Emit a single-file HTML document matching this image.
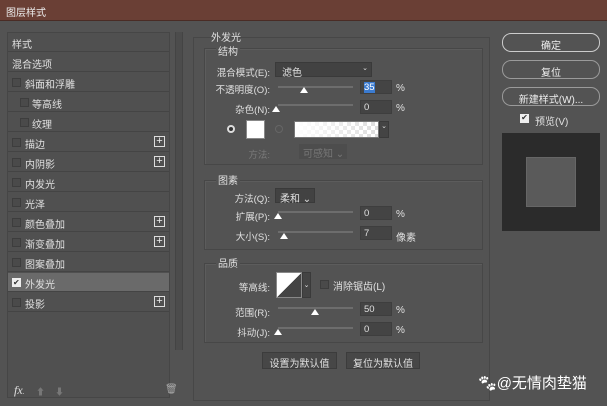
<!DOCTYPE html><html><head><meta charset="utf-8"><style>
*{margin:0;padding:0;box-sizing:border-box}
body{width:607px;height:406px;background:#535353;font-family:"Liberation Sans","Noto Sans CJK SC",sans-serif;font-size:10px;color:#e0e0e0;position:relative;overflow:hidden}
.a{position:absolute}
.title{left:0;top:0;width:607px;height:21px;background:#6a3f35;color:#eee;font-size:10px;padding:4px 0 0 6px;border-bottom:1px solid #4a2c25}
.row{position:absolute;left:8px;width:161px;height:19px;border-bottom:1px solid #444;padding:3px 0 0 4px;font-size:10px}
.cb{position:absolute;width:9px;height:9px;border:1px solid #3d3d3d;background:#4a4a4a;top:5px}
.plus{position:absolute;left:146px;top:3px;width:11px;height:11px;border:1px solid #ddd;color:#eee;font-size:11px;line-height:8px;text-align:center}
.box{position:absolute;border:1px solid #474747;box-shadow:inset 1px 1px 0 #5c5c5c}
.lbl{position:absolute;text-align:right;font-size:9.5px}
.trk{position:absolute;height:2px;background:#6d6d6d}
.th{position:absolute;width:0;height:0;border-left:4px solid transparent;border-right:4px solid transparent;border-bottom:6px solid #fff}
.inp{position:absolute;width:32px;height:14px;background:#444;border:1px solid #3e3e3e;padding:1px 0 0 3px;font-size:9.5px}
.btn{position:absolute;border:1px solid #9a9a9a;border-radius:9px;text-align:center;font-size:10px;color:#eee;height:19px;padding-top:3px}
.gb{position:absolute;background:#474747;border:1px solid #3c3c3c;text-align:center;font-size:10px;padding-top:2px}
</style></head><body>
<div class="a title">图层样式</div>
<div class="a" style="left:7px;top:32px;width:163px;height:366px;background:#505050;border:1px solid #464646"></div>
<div class="a" style="left:175px;top:32px;width:8px;height:318px;background:#4c4c4c;border-left:1px solid #444;border-right:1px solid #444"></div>
<div class="row" style="top:33px">样式</div>
<div class="row" style="top:53px">混合选项</div>
<div class="row" style="top:73px;padding-left:17px"><span class="cb" style="left:4px"></span>斜面和浮雕</div>
<div class="row" style="top:93px;padding-left:24px"><span class="cb" style="left:12px"></span>等高线</div>
<div class="row" style="top:113px;padding-left:24px"><span class="cb" style="left:12px"></span>纹理</div>
<div class="row" style="top:133px;padding-left:17px"><span class="cb" style="left:4px"></span>描边<span class="plus">+</span></div>
<div class="row" style="top:153px;padding-left:17px"><span class="cb" style="left:4px"></span>内阴影<span class="plus">+</span></div>
<div class="row" style="top:173px;padding-left:17px"><span class="cb" style="left:4px"></span>内发光</div>
<div class="row" style="top:193px;padding-left:17px"><span class="cb" style="left:4px"></span>光泽</div>
<div class="row" style="top:213px;padding-left:17px"><span class="cb" style="left:4px"></span>颜色叠加<span class="plus">+</span></div>
<div class="row" style="top:233px;padding-left:17px"><span class="cb" style="left:4px"></span>渐变叠加<span class="plus">+</span></div>
<div class="row" style="top:253px;padding-left:17px"><span class="cb" style="left:4px"></span>图案叠加</div>
<div class="row" style="top:273px;padding-left:17px;background:#6a6a6a"><span class="cb" style="left:4px;background:#eee;border-color:#eee;color:#333;font-size:8px;line-height:7px">✔</span>外发光</div>
<div class="row" style="top:293px;padding-left:17px"><span class="cb" style="left:4px"></span>投影<span class="plus">+</span></div>
<div class="a" style="left:14px;top:383px;font-style:italic;font-family:'Liberation Serif',serif;font-size:12px">fx<span style="font-size:7px">.</span></div>
<div class="a" style="left:36px;top:385px;color:#777;font-size:9px">⬆</div>
<div class="a" style="left:55px;top:385px;color:#777;font-size:9px">⬇</div>
<div class="a" style="left:165px;top:384px;color:#aaa;font-size:10px">🗑</div>
<div class="a" style="left:193px;top:37px;width:297px;height:364px;border:1px solid #474747"></div>
<div class="a" style="left:211px;top:29px;font-size:10px">外发光</div>
<div class="box" style="left:204px;top:48px;width:279px;height:117px"></div>
<div class="a" style="left:216px;top:43px;background:#535353;padding:0 2px">结构</div>
<div class="lbl" style="left:200px;width:70px;top:65px">混合模式(E):</div>
<div class="a" style="left:275px;top:62px;width:97px;height:15px;background:#424242;border:1px solid #3a3a3a;padding:1px 0 0 6px">滤色<span style="position:absolute;right:3px;top:1px;font-size:7px">⌄</span></div>
<div class="lbl" style="left:200px;width:70px;top:82px">不透明度(O):</div>
<div class="trk" style="left:278px;top:86px;width:75px"></div><div class="th" style="left:300px;top:87px"></div>
<div class="inp" style="left:360px;top:80px;width:32px"><span style="background:#3b7bd0;color:#fff">35</span></div><div class="a" style="left:396px;top:83px">%</div>
<div class="lbl" style="left:200px;width:70px;top:102px">杂色(N):</div>
<div class="trk" style="left:278px;top:104px;width:75px"></div><div class="th" style="left:272px;top:106px"></div>
<div class="inp" style="left:360px;top:100px">0</div><div class="a" style="left:396px;top:103px">%</div>
<div class="a" style="left:227px;top:125px;width:8px;height:8px;border-radius:50%;border:2px solid #ddd;background:#333"></div>
<div class="a" style="left:246px;top:120px;width:19px;height:19px;background:#fff;border:1px solid #888"></div>
<div class="a" style="left:275px;top:125px;width:8px;height:8px;border-radius:50%;border:1px solid #666"></div>
<div class="a" style="left:294px;top:121px;width:85px;height:17px;border:1px solid #777;background:linear-gradient(90deg,#fff,rgba(255,255,255,0)),repeating-conic-gradient(#ddd 0 25%,#fff 0 50%) 0 0/8px 8px"></div>
<div class="a" style="left:379px;top:121px;width:10px;height:17px;background:#444;border:1px solid #3a3a3a;font-size:7px;text-align:center">⌄</div>
<div class="lbl" style="left:240px;width:30px;top:147px;color:#7a7a7a">方法:</div>
<div class="a" style="left:299px;top:144px;width:48px;height:15px;background:#4d4d4d;color:#777;padding:1px 0 0 4px">可感知 ⌄</div>
<div class="box" style="left:204px;top:180px;width:279px;height:70px"></div>
<div class="a" style="left:216px;top:172px;background:#535353;padding:0 2px">图素</div>
<div class="lbl" style="left:200px;width:70px;top:191px">方法(Q):</div>
<div class="a" style="left:275px;top:188px;width:40px;height:15px;background:#424242;border:1px solid #3a3a3a;padding:1px 0 0 4px">柔和 ⌄</div>
<div class="lbl" style="left:200px;width:70px;top:209px">扩展(P):</div>
<div class="trk" style="left:278px;top:211px;width:75px"></div><div class="th" style="left:274px;top:213px"></div>
<div class="inp" style="left:360px;top:206px">0</div><div class="a" style="left:396px;top:209px">%</div>
<div class="lbl" style="left:200px;width:70px;top:229px">大小(S):</div>
<div class="trk" style="left:278px;top:231px;width:75px"></div><div class="th" style="left:280px;top:233px"></div>
<div class="inp" style="left:360px;top:226px">7</div><div class="a" style="left:396px;top:229px">像素</div>
<div class="box" style="left:204px;top:263px;width:279px;height:80px"></div>
<div class="a" style="left:216px;top:255px;background:#535353;padding:0 2px">品质</div>
<div class="lbl" style="left:200px;width:70px;top:280px">等高线:</div>
<div class="a" style="left:276px;top:272px;width:26px;height:26px;background:linear-gradient(to top left,#444 50%,#fff 50%);border:1px solid #888"></div>
<div class="a" style="left:302px;top:272px;width:9px;height:26px;background:#444;border:1px solid #3a3a3a;font-size:7px;padding-top:8px;text-align:center">⌄</div>
<div class="a" style="left:320px;top:280px;width:9px;height:9px;background:#4a4a4a;border:1px solid #3d3d3d"></div>
<div class="a" style="left:333px;top:278px">消除锯齿(L)</div>
<div class="lbl" style="left:200px;width:70px;top:305px">范围(R):</div>
<div class="trk" style="left:278px;top:307px;width:75px"></div><div class="th" style="left:311px;top:309px"></div>
<div class="inp" style="left:360px;top:302px">50</div><div class="a" style="left:396px;top:305px">%</div>
<div class="lbl" style="left:200px;width:70px;top:325px">抖动(J):</div>
<div class="trk" style="left:278px;top:327px;width:75px"></div><div class="th" style="left:274px;top:329px"></div>
<div class="inp" style="left:360px;top:322px">0</div><div class="a" style="left:396px;top:325px">%</div>
<div class="gb" style="left:262px;top:352px;width:75px;height:17px">设置为默认值</div>
<div class="gb" style="left:346px;top:352px;width:74px;height:17px">复位为默认值</div>
<div class="btn" style="left:502px;top:33px;width:98px;border-color:#ccc">确定</div>
<div class="btn" style="left:502px;top:60px;width:98px">复位</div>
<div class="btn" style="left:502px;top:87px;width:98px">新建样式(W)...</div>
<div class="a" style="left:520px;top:114px;width:9px;height:9px;background:#eee;color:#333;font-size:8px;line-height:8px;text-align:center">✔</div>
<div class="a" style="left:535px;top:113px">预览(V)</div>
<div class="a" style="left:502px;top:133px;width:98px;height:98px;background:#2b2b2b"></div>
<div class="a" style="left:526px;top:157px;width:50px;height:50px;background:#5a5a5a;border:1px solid #666"></div>
<div class="a" style="left:478px;top:372px;font-size:15px;color:#fff"><span style="filter:grayscale(1) brightness(4)">🐾</span>@无情肉垫猫</div>
</body></html>
